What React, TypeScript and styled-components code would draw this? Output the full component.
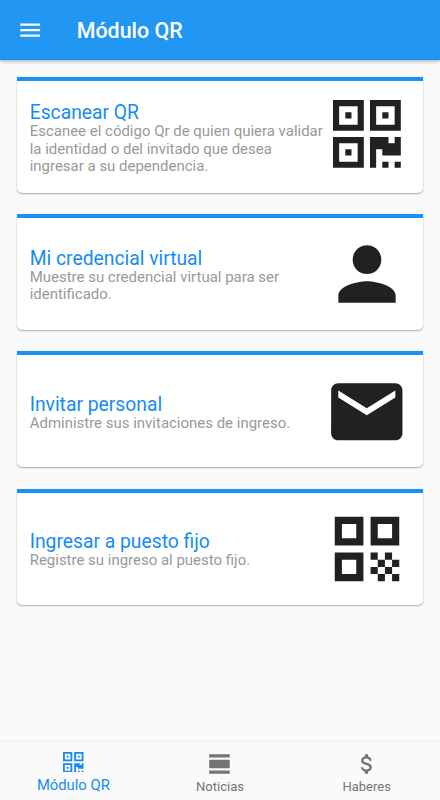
import React from 'react';
import styled, { createGlobalStyle } from 'styled-components';

const GlobalStyle = createGlobalStyle`
  * { box-sizing: border-box; }
  body { margin: 0; background: #fafafa; font-family: Roboto, sans-serif; }
`;

const Screen = styled.div`
  display: flex;
  flex-direction: column;
  width: 440px;
  height: 800px;
  overflow: hidden;
  background: #fafafa;
`;

const AppBar = styled.header`
  display: flex;
  align-items: center;
  flex: none;
  height: 60px;
  padding: 1px 0 0 16.8px;
  gap: 33.6px;
  background: #2196f3;
  border-bottom: 1px solid #1a8cf0;
  box-shadow: 0 1px 4px rgba(0, 0, 0, 0.36);
  color: #fff;
`;

const AppTitle = styled.h1`
  margin: 0;
  padding-top: 1px;
  font-size: 21.4px;
  font-weight: 500;
  line-height: 28px;
  white-space: nowrap;
`;

const CardList = styled.main`
  display: flex;
  flex: 1;
  flex-direction: column;
  gap: 21.2px;
  padding: 17px 17px 0;
`;

const Card = styled.section`
  display: flex;
  align-items: center;
  flex: none;
  height: 116px;
  padding-left: 12.7px;
  background: #fff;
  border-top: 4px solid #1a91f3;
  border-radius: 0 0 5px 5px;
  box-shadow: 0 1px 1.5px rgba(0, 0, 0, 0.3), 0 0 1px rgba(0, 0, 0, 0.18);
`;

const CardText = styled.div`
  flex: none;
  width: 297px;
  padding-top: 1.4px;
`;

const CardTitle = styled.h2`
  margin: 0;
  padding-top: 2.6px;
  color: #168cf2;
  font-size: 19.3px;
  font-weight: 400;
  line-height: 20.3px;
`;

const CardDescription = styled.p`
  margin: 0;
  color: #999;
  font-size: 14.98px;
  line-height: 17.2px;
`;

const CardIcon = styled.div<{ $lift: number }>`
  display: flex;
  justify-content: center;
  width: 81px;
  padding-bottom: ${(p) => p.$lift}px;
  color: #212121;
`;

const BottomNav = styled.nav`
  display: grid;
  grid-template-columns: repeat(3, 1fr);
  flex: none;
  height: 59px;
  border-top: 1px solid #f0f0f0;
  box-shadow: 0 -1px 2px rgba(0, 0, 0, 0.03);
`;

const NavItem = styled.a<{ $active?: boolean }>`
  display: flex;
  flex-direction: column;
  align-items: center;
  padding-top: ${(p) => (p.$active ? 7 : 8.6)}px;
  color: ${(p) => (p.$active ? '#168cf2' : '#747474')};
  font-size: ${(p) => (p.$active ? 14.8 : 13)}px;
`;

const NavIcon = styled.span`
  display: flex;
  align-items: center;
  justify-content: center;
  height: 26px;
`;

const NavLabel = styled.span`
  line-height: 20px;
`;

const Icon = styled.svg`
  display: block;
  flex: none;
  fill: currentColor;
`;

const MaterialIcon = ({ size, d }: { size: number; d: string }) => (
  <Icon width={size} height={size} viewBox="0 0 24 24">
    <path d={d} />
  </Icon>
);

const QrIcon = ({ size }: { size: number }) => (
  <Icon width={size} height={size} viewBox="0 0 11 11">
    <path
      fillRule="evenodd"
      d="M0 0h5v5H0zM1 1v3h3V1zM2 2h1v1H2zM6 0h5v5H6zM7 1v3h3V1zM8 2h1v1H8zM0 6h5v5H0zM1 7v3h3V7zM2 8h1v1H2zM6 6h3v1h1V6h1v3H8V8H7v3H6zM8 10h1v1H8zM10 10h1v1h-1z"
    />
  </Icon>
);

const paths = {
  menu: 'M3 18h18v-2H3v2zm0-5h18v-2H3v2zm0-7v2h18V6H3z',
  person:
    'M12 12c2.21 0 4-1.79 4-4s-1.79-4-4-4-4 1.79-4 4 1.79 4 4 4zm0 2c-2.67 0-8 1.34-8 4v2h16v-2c0-2.66-5.33-4-8-4z',
  mail: 'M20 4H4c-1.1 0-1.99.9-1.99 2L2 18c0 1.1.9 2 2 2h16c1.1 0 2-.9 2-2V6c0-1.1-.9-2-2-2zm0 4l-8 5-8-5V6l8 5 8-5v2z',
  checkerQr:
    'M3 11h8V3H3v8zm2-6h4v4H5V5zM3 21h8v-8H3v8zm2-6h4v4H5v-4zM13 3v8h8V3h-8zm6 6h-4V5h4v4zM19 19h2v2h-2zM13 13h2v2h-2zM15 15h2v2h-2zM13 17h2v2h-2zM15 19h2v2h-2zM17 17h2v2h-2zM17 13h2v2h-2zM19 15h2v2h-2z',
  viewDay:
    'M2 21h19v-3H2v3zM20 8H3c-.55 0-1 .45-1 1v6c0 .55.45 1 1 1h17c.55 0 1-.45 1-1V9c0-.55-.45-1-1-1zM2 3v3h19V3H2z',
  money:
    'M11.8 10.9c-2.27-.59-3-1.2-3-2.15 0-1.09 1.01-1.85 2.7-1.85 1.78 0 2.44.85 2.5 2.1h2.21c-.07-1.72-1.12-3.3-3.21-3.81V3h-3v2.16c-1.94.42-3.5 1.68-3.5 3.61 0 2.31 1.91 3.46 4.7 4.13 2.5.6 3 1.48 3 2.41 0 .69-.49 1.79-2.7 1.79-2.06 0-2.87-.92-2.98-2.1h-2.2c.12 2.19 1.76 3.42 3.68 3.83V21h3v-2.15c1.95-.37 3.5-1.5 3.5-3.55 0-2.84-2.43-3.81-4.7-4.4z',
};

const cards = [
  {
    title: 'Escanear QR',
    description:
      'Escanee el código Qr de quien quiera validar la identidad o del invitado que desea ingresar a su dependencia.',
    icon: <QrIcon size={67.8} />,
    lift: 6,
  },
  {
    title: 'Mi credencial virtual',
    description: 'Muestre su credencial virtual para ser identificado.',
    icon: <MaterialIcon size={86} d={paths.person} />,
    lift: 0,
  },
  {
    title: 'Invitar personal',
    description: 'Administre sus invitaciones de ingreso.',
    icon: <MaterialIcon size={85.6} d={paths.mail} />,
    lift: 0,
  },
  {
    title: 'Ingresar a puesto fijo',
    description: 'Registre su ingreso al puesto fijo.',
    icon: <MaterialIcon size={86} d={paths.checkerQr} />,
    lift: 0,
  },
];

const tabs = [
  { label: 'Módulo QR', icon: <QrIcon size={20.5} />, active: true },
  { label: 'Noticias', icon: <MaterialIcon size={26} d={paths.viewDay} />, active: false },
  { label: 'Haberes', icon: <MaterialIcon size={26} d={paths.money} />, active: false },
];

export default function App() {
  return (
    <>
      <GlobalStyle />
      <Screen>
        <AppBar>
          <MaterialIcon size={26.4} d={paths.menu} />
          <AppTitle>Módulo QR</AppTitle>
        </AppBar>
        <CardList>
          {cards.map((card) => (
            <Card key={card.title}>
              <CardText>
                <CardTitle>{card.title}</CardTitle>
                <CardDescription>{card.description}</CardDescription>
              </CardText>
              <CardIcon $lift={card.lift}>{card.icon}</CardIcon>
            </Card>
          ))}
        </CardList>
        <BottomNav>
          {tabs.map((tab) => (
            <NavItem key={tab.label} $active={tab.active}>
              <NavIcon>{tab.icon}</NavIcon>
              <NavLabel>{tab.label}</NavLabel>
            </NavItem>
          ))}
        </BottomNav>
      </Screen>
    </>
  );
}
